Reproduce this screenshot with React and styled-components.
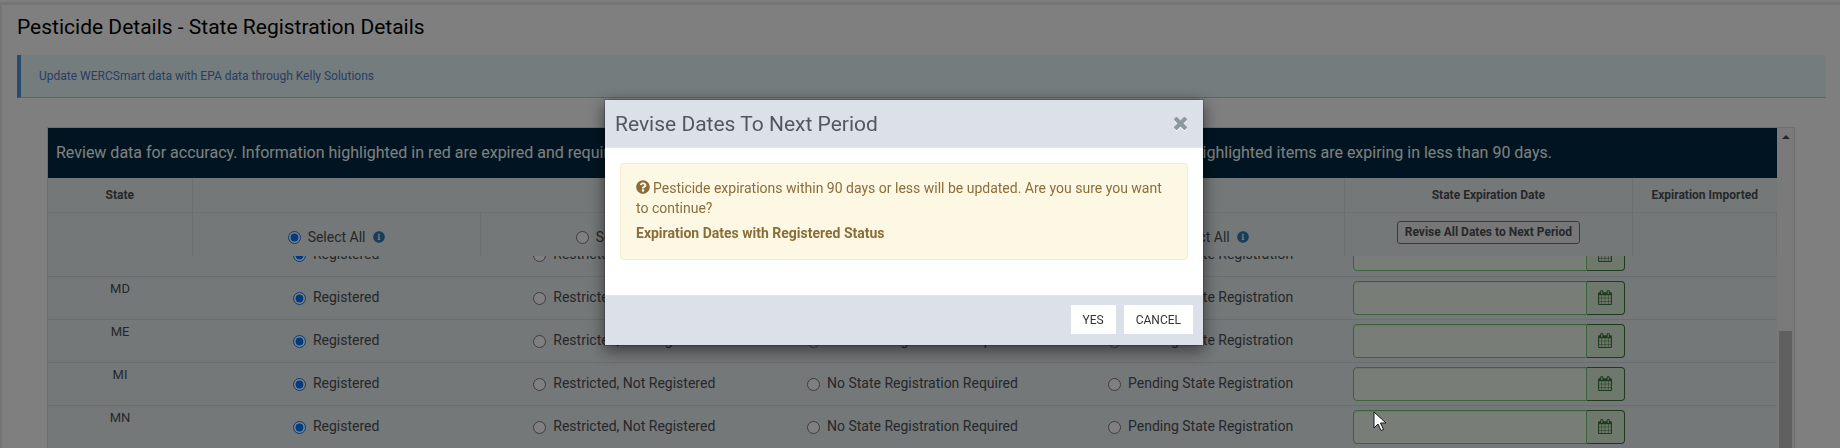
import React from "react";
import styled, { createGlobalStyle, css } from "styled-components";
import { FaInfoCircle, FaQuestionCircle } from "react-icons/fa";

const GlobalStyle = createGlobalStyle`
  *, *::before, *::after { box-sizing: border-box; }
  body {
    margin: 0;
    overflow: hidden;
    background: #fff;
    color: #4b5054;
    font: 14px/20px Roboto, "Liberation Sans", sans-serif;
  }
  button, input { font: inherit; color: inherit; }
`;

const Page = styled.main`
  margin-top: 2px;
  border-top: 3px solid #ebebeb;
  border-left: 2px solid #ebebeb;
`;

const PageTitle = styled.h1`
  margin: 0;
  padding: 8px 15px 14px;
  font-size: 21px;
  line-height: 28px;
  font-weight: 400;
  color: #000;
`;

const Notice = styled.aside`
  display: flex;
  align-items: center;
  height: 43px;
  margin: 0 14px 29px 15px;
  padding-left: 18px;
  background: #ebf8fb;
  border-left: 4px solid #5492e0;
  border-bottom: 1px solid #b4cce0;
  font-size: 12px;
`;

const NoticeLink = styled.a`
  color: #4a7ec8;
  text-decoration: none;
`;

const GridFrame = styled.section`
  display: flex;
  margin: 0 45px;
  border: 1px solid #dcdcdc;
  border-bottom: 0;
`;

const GridMain = styled.div`
  flex: 1;
  min-width: 0;
  background: #eaf1f3;
`;

const Banner = styled.div`
  display: flex;
  justify-content: space-between;
  align-items: center;
  height: 50px;
  padding: 0 225px 0 8px;
  background: #002b42;
  color: #fff;
  font-size: 16px;
  white-space: nowrap;
`;

const Table = styled.table`
  width: 100%;
  table-layout: fixed;
  border-collapse: collapse;
`;

const Col = styled.col`
  width: ${(p) => (p.$wide ? "16.66%" : "8.33%")};
`;

const line = css`1px solid #d9dee1`;

const HeadCell = styled.th`
  height: 34px;
  padding: 0;
  border-right: ${line};
  border-bottom: ${line};
  font-size: 12px;
  font-weight: 700;
  text-align: center;
  &:last-child { border-right: 0; }
`;

const SelectCell = styled.th`
  height: 44px;
  padding: 8px 0 0;
  border-right: ${line};
  font-size: 12px;
  text-align: center;
`;

const ActionCell = styled(SelectCell)`
  vertical-align: top;
`;

const ScrollBody = styled.div`
  overflow: hidden;
`;

const BodyTable = styled(Table)`
  margin-top: -23px;
`;

const Cell = styled.td`
  height: 43px;
  padding: 0 8px;
  border-bottom: 1px solid #d9dadf;
  text-align: center;
`;

const StatusCell = styled(Cell)`
  padding-top: 2px;
`;

const StateCell = styled.th`
  padding: 2px 0 0;
  border-bottom: 1px solid #d9dadf;
  font-size: 13px;
  font-weight: 400;
  vertical-align: top;
`;

const Choice = styled.label`
  display: inline-flex;
  align-items: center;
  gap: 7px;
  font-size: 14px;
  font-weight: 400;
  white-space: nowrap;
`;

const Radio = styled.input`
  width: 13px;
  height: 13px;
  margin: 2px 0 0;
`;

const InfoIcon = styled(FaInfoCircle)`
  width: 12px;
  height: 12px;
  margin-top: 1px;
  color: #337ab7;
`;

const ReviseButton = styled.button`
  height: 23px;
  padding: 0 7px;
  border: 1px solid #767676;
  border-radius: 3px;
  background: #efefef;
  line-height: 20px;
  font-weight: 700;
`;

const DateGroup = styled.div`
  display: flex;
  height: 34px;
`;

const DateInput = styled.input`
  flex: 1;
  min-width: 0;
  border: 1px solid #78c77a;
  border-radius: 4px 0 0 4px;
  background: #f0fdee;
  box-shadow: inset 0 1px 1px rgba(0, 0, 0, 0.075);
`;

const DateButton = styled.button`
  display: flex;
  align-items: center;
  justify-content: center;
  width: 38px;
  padding: 0;
  border: 1px solid #3c763d;
  border-left: 0;
  border-radius: 0 4px 4px 0;
  background: #dff0d8;
  color: #3c763d;
`;

const Scrollbar = styled.div`
  display: flex;
  flex-direction: column;
  align-items: center;
  width: 17px;
  padding-top: 7px;
  background: #f4f4f4;
`;

const ScrollArrow = styled.span`
  border: 4px solid transparent;
  border-top: 0;
  border-bottom-color: #505050;
`;

const ScrollThumb = styled.span`
  flex: 1;
  width: 13px;
  margin-top: 192px;
  background: #c1c1c1;
`;

const Overlay = styled.div`
  position: fixed;
  inset: 0;
  display: flex;
  justify-content: center;
  align-items: flex-start;
  padding: 99px 32px 0 0;
  background: rgba(0, 0, 0, 0.5);
`;

const Dialog = styled.section`
  width: 600px;
  border: 1px solid rgba(0, 0, 0, 0.2);
  background: #fff;
  background-clip: padding-box;
  box-shadow: 0 5px 15px rgba(0, 0, 0, 0.5);
`;

const DialogHeader = styled.header`
  display: flex;
  align-items: center;
  justify-content: space-between;
  height: 48px;
  padding: 0 16px 0 10px;
  background: #dce0e8;
  border-bottom: 1px solid #e5e5e5;
`;

const DialogTitle = styled.h2`
  margin: 0;
  font-size: 21px;
  line-height: 28px;
  font-weight: 400;
  color: #53575f;
`;

const CloseButton = styled.button`
  display: flex;
  padding: 0;
  border: 0;
  background: none;
  color: #8e989f;
  filter: drop-shadow(0 1px 0 #fff);
`;

const DialogBody = styled.div`
  padding: 15px 15px 35px;
`;

const Warning = styled.div`
  padding: 14px 15px 16px;
  border: 1px solid #faebcc;
  border-radius: 4px;
  background: #fdf8e4;
  color: #8a6d3b;
  p { margin: 0 0 5px; }
`;

const QuestionIcon = styled(FaQuestionCircle)`
  width: 14px;
  height: 14px;
  margin-right: 3px;
  vertical-align: -1px;
`;

const DialogFooter = styled.footer`
  display: flex;
  justify-content: flex-end;
  gap: 8px;
  padding: 9px 10px 11px;
  background: #dce0e8;
  border-top: 1px solid #e5e5e5;
`;

const FooterButton = styled.button`
  height: 29px;
  padding: 0 12px;
  border: 0;
  background: #fff;
  color: #333;
  font-size: 12px;
`;

const Pointer = styled.svg`
  position: absolute;
  left: 1373px;
  top: 411px;
`;

const CalendarIcon = () => (
  <svg width="14" height="15" viewBox="0 0 1664 1792" fill="currentColor" aria-hidden="true">
    <path d="M128 1664h288v-288h-288v288zm352 0h320v-288h-320v288zm-352-352h288v-320h-288v320zm352 0h320v-320h-320v320zm-352-384h288v-288h-288v288zm736 736h320v-288h-320v288zm-384-736h320v-288h-320v288zm768 736h288v-288h-288v288zm-384-352h320v-320h-320v320zm-352-864v-288q0-13-9.500-22.500t-22.500-9.500h-64q-13 0-22.500 9.500t-9.500 22.500v288q0 13 9.500 22.500t22.500 9.500h64q13 0 22.500-9.500t9.500-22.500zm736 864h288v-320h-288v320zm-384-384h320v-288h-320v288zm384 0h288v-288h-288v288zm32-480v-288q0-13-9.500-22.500t-22.500-9.500h-64q-13 0-22.500 9.500t-9.500 22.500v288q0 13 9.500 22.500t22.500 9.500h64q13 0 22.500-9.500t9.500-22.500zm384-64v1280q0 52-38 90t-90 38h-1408q-52 0-90-38t-38-90v-1280q0-52 38-90t90-38h128v-96q0-66 47-113t113-47h64q66 0 113 47t47 113v96h384v-96q0-66 47-113t113-47h64q66 0 113 47t47 113v96h128q52 0 90 38t38 90z" />
  </svg>
);

const CloseIcon = () => (
  <svg width="13" height="13" viewBox="110 366 1188 1188" fill="currentColor" aria-hidden="true">
    <path d="M1298 1322q0 40-28 68l-136 136q-28 28-68 28t-68-28l-294-294-294 294q-28 28-68 28t-68-28l-136-136q-28-28-28-68t28-68l294-294-294-294q-28-28-28-68t28-68l136-136q28-28 68-28t68 28l294 294 294-294q28-28 68-28t68 28l136 136q28 28 28 68t-28 68l-294 294 294 294q28 28 28 68z" />
  </svg>
);

const STATUSES = [
  "Registered",
  "Restricted, Not Registered",
  "No State Registration Required",
  "Pending State Registration",
];

const STATES = ["", "MD", "ME", "MI", "MN"];

const Columns = () => (
  <colgroup>
    <Col />
    <Col $wide />
    <Col $wide />
    <Col $wide />
    <Col $wide />
    <Col $wide />
    <Col />
  </colgroup>
);

const StateRow = ({ name, index }) => (
  <tr>
    <StateCell scope="row">{name}</StateCell>
    {STATUSES.map((status, i) => (
      <StatusCell key={status}>
        <Choice>
          <Radio type="radio" name={`status-${index}`} defaultChecked={i === 0} />
          {status}
        </Choice>
      </StatusCell>
    ))}
    <Cell>
      <DateGroup>
        <DateInput type="text" aria-label="State Expiration Date" />
        <DateButton type="button" aria-label="Choose date">
          <CalendarIcon />
        </DateButton>
      </DateGroup>
    </Cell>
    <Cell />
  </tr>
);

export default function App() {
  return (
    <>
      <GlobalStyle />
      <Page>
        <PageTitle>Pesticide Details - State Registration Details</PageTitle>
        <Notice>
          <NoticeLink href="#kelly">
            Update WERCSmart data with EPA data through Kelly Solutions
          </NoticeLink>
        </Notice>
        <GridFrame>
          <GridMain>
            <Banner>
              <span>
                Review data for accuracy. Information highlighted in red are expired and require updates.
              </span>
              <span>Highlighted items are expiring in less than 90 days.</span>
            </Banner>
            <Table>
              <Columns />
              <thead>
                <tr>
                  <HeadCell>State</HeadCell>
                  <HeadCell colSpan={4} />
                  <HeadCell>State Expiration Date</HeadCell>
                  <HeadCell>Expiration Imported</HeadCell>
                </tr>
                <tr>
                  <SelectCell />
                  {STATUSES.map((status, i) => (
                    <SelectCell key={status}>
                      <Choice>
                        <Radio type="radio" name="select-all" defaultChecked={i === 0} />
                        Select All
                        <InfoIcon />
                      </Choice>
                    </SelectCell>
                  ))}
                  <ActionCell>
                    <ReviseButton type="button">Revise All Dates to Next Period</ReviseButton>
                  </ActionCell>
                  <SelectCell />
                </tr>
              </thead>
            </Table>
            <ScrollBody>
              <BodyTable>
                <Columns />
                <tbody>
                  {STATES.map((name, i) => (
                    <StateRow key={i} name={name} index={i} />
                  ))}
                </tbody>
              </BodyTable>
            </ScrollBody>
          </GridMain>
          <Scrollbar>
            <ScrollArrow />
            <ScrollThumb />
          </Scrollbar>
        </GridFrame>
      </Page>
      <Overlay>
        <Dialog role="dialog" aria-modal="true" aria-labelledby="dialog-title">
          <DialogHeader>
            <DialogTitle id="dialog-title">Revise Dates To Next Period</DialogTitle>
            <CloseButton type="button" aria-label="Close">
              <CloseIcon />
            </CloseButton>
          </DialogHeader>
          <DialogBody>
            <Warning>
              <p>
                <QuestionIcon />
                Pesticide expirations within 90 days or less will be updated. Are you sure you want to
                continue?
              </p>
              <strong>Expiration Dates with Registered Status</strong>
            </Warning>
          </DialogBody>
          <DialogFooter>
            <FooterButton type="button">YES</FooterButton>
            <FooterButton type="button">CANCEL</FooterButton>
          </DialogFooter>
        </Dialog>
        <Pointer width="14" height="21" viewBox="0 0 14 21" aria-hidden="true">
          <path
            d="M1 1v16l4-4 3 6.500 2.500-1-3-6.500h5.500z"
            fill="#fff"
            stroke="#111827"
            strokeWidth="1"
          />
        </Pointer>
      </Overlay>
    </>
  );
}
